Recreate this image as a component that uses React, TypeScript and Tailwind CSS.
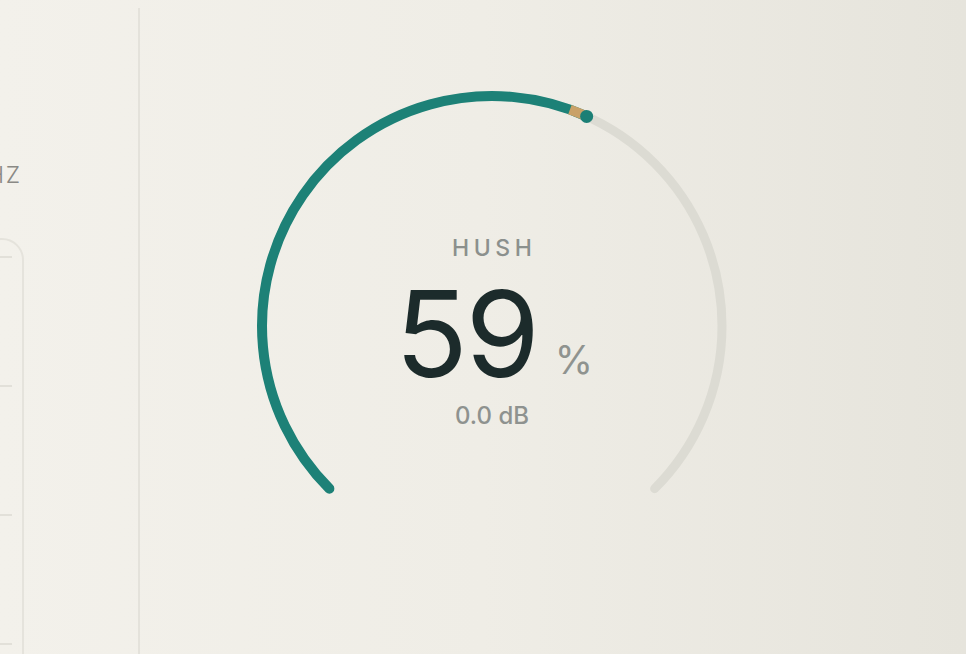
const R = 230
const C = 240

// point on the dial, angle in degrees clockwise from 12 o'clock
const pt = (deg: number) => {
  const a = (deg * Math.PI) / 180
  return [C + R * Math.sin(a), C - R * Math.cos(a)]
}

const arc = (from: number, to: number) => {
  const [x1, y1] = pt(from)
  const [x2, y2] = pt(to)
  const large = to - from > 180 ? 1 : 0
  return `M ${x1.toFixed(2)} ${y1.toFixed(2)} A ${R} ${R} 0 ${large} 1 ${x2.toFixed(2)} ${y2.toFixed(2)}`
}

const Gauge = ({ value }: { value: number }) => {
  const start = -135
  const end = start + (270 * value) / 100
  const [dx, dy] = pt(end)
  return (
    <svg width="480" height="480" viewBox="0 0 480 480" className="col-start-1 row-start-1">
      <path d={arc(start, 135)} fill="none" stroke="#dcdbd3" strokeWidth="9" strokeLinecap="round" />
      <path d={arc(start, end)} fill="none" stroke="#1d8177" strokeWidth="10" strokeLinecap="round" />
      <path d={arc(end - 4.5, end - 1)} fill="none" stroke="#c9a168" strokeWidth="10" />
      <circle cx={dx} cy={dy} r="6.5" fill="#1b7f75" />
    </svg>
  )
}

export default function App() {
  return (
    <div className="flex h-[654px] w-full overflow-hidden bg-gradient-to-r from-[#f3f1eb] via-[#efede6] to-[#e6e4dc] font-['Inter',sans-serif]">
      {/* band selector, mostly scrolled off to the left */}
      <div className="mt-2 w-[140px] shrink-0 overflow-hidden border-r-2 border-[#e4e2db]">
        <div className="-ml-[176px] w-[200px]">
          <div className="pr-[2px] pt-[153px] text-right text-[23px] font-light uppercase leading-7 tracking-[0.08em] text-[#8a8985]">2.4 kHz</div>
          <div className="mt-[49px] h-[460px] rounded-[22px] border-2 border-[#e5e3dc] pt-[16px]">
            <div className="flex flex-col gap-[127px] pr-[10px]">
              <div className="h-[2px] bg-[#e2e0d9]" />
              <div className="h-[2px] bg-[#e2e0d9]" />
              <div className="h-[2px] bg-[#e2e0d9]" />
              <div className="h-[2px] bg-[#e2e0d9]" />
            </div>
          </div>
        </div>
      </div>

      <div className="flex-1 pl-[112px] pt-[86px]">
        <div className="grid h-[480px] w-[480px]">
          <Gauge value={59} />
          <div className="col-start-1 row-start-1 flex flex-col items-center pt-[149px]">
            <div className="pl-[0.2em] text-[23px] font-medium leading-[26px] tracking-[0.2em] text-[#8b908d]">HUSH</div>
            <div className="mt-[25px] flex items-baseline gap-[17px] pl-[4px]">
              <span className="text-[120px] font-normal leading-[96px] tracking-[-0.02em] text-[#1c2b2b]">59</span>
              <span className="-translate-y-[3px] text-[39px] leading-none text-[#8f938f]">%</span>
            </div>
            <div className="mt-[21px] text-[24px] font-medium leading-[26px] text-[#8e928f]">0.0 dB</div>
          </div>
        </div>
      </div>
    </div>
  )
}
